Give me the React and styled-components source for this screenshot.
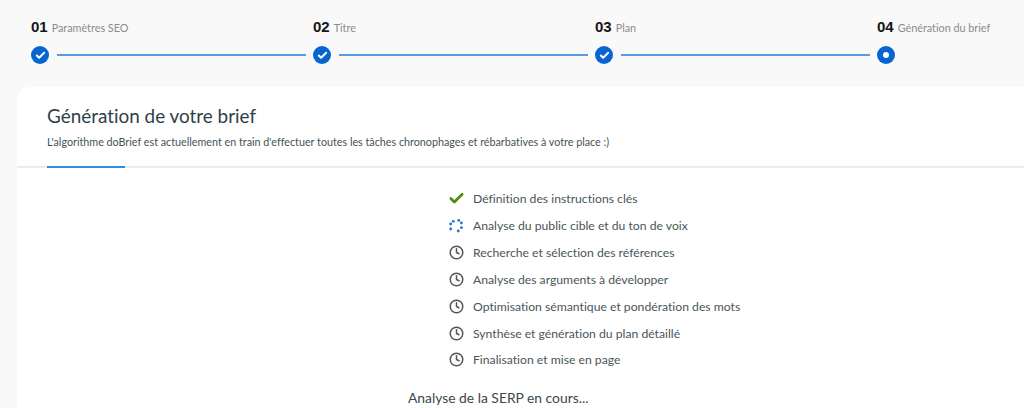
import styled, { createGlobalStyle } from "styled-components";
import { Check, Clock } from "lucide-react";

const GlobalStyle = createGlobalStyle`
  html, body {
    margin: 0;
    height: 100%;
    overflow: hidden;
    background: #f9f9f9;
    font-family: "Lato", "Noto Sans", sans-serif;
    font-variant-ligatures: none;
  }
`;

const Page = styled.div`
  height: 408px;
  overflow: hidden;
  padding-top: 18px;
  box-sizing: border-box;
`;

const Stepper = styled.div`
  display: flex;
  padding-left: 31px;
  height: 69px;
`;

const Step = styled.div`
  flex: 0 0 282px;
  display: flex;
  flex-direction: column;
`;

const StepHead = styled.div`
  display: flex;
  align-items: baseline;
  height: 18px;
  white-space: nowrap;
`;

const StepNumber = styled.span`
  font-family: "Liberation Sans", sans-serif;
  font-weight: 700;
  font-size: 15px;
  color: #161616;
  margin-right: 4px;
`;

const StepLabel = styled.span`
  font-size: 10.8px;
  color: #8b8b8b;
`;

const StepTrack = styled.div`
  display: flex;
  align-items: center;
  margin-top: 10px;
`;

const Dot = styled.div`
  flex: 0 0 18px;
  width: 18px;
  height: 18px;
  border-radius: 50%;
  background: #0764d0;
  display: flex;
  align-items: center;
  justify-content: center;
  color: #fff;
`;

const DotCenter = styled.div`
  width: 6px;
  height: 6px;
  border-radius: 50%;
  background: #fff;
`;

const Line = styled.div`
  width: 249px;
  height: 2px;
  margin-left: 8px;
  background: #5b9be0;
`;

const Card = styled.section`
  margin-left: 17px;
  height: 340px;
  background: #fff;
  border-radius: 12px 0 0 0;
  padding-top: 17px;
  box-sizing: border-box;
`;

const CardHeader = styled.header`
  padding-left: 30px;
  height: 62px;
  border-bottom: 2px solid #ececec;
  position: relative;
`;

const Title = styled.h1`
  margin: 0;
  font-size: 18.9px;
  line-height: 23px;
  font-weight: 400;
  color: #2f3f47;
`;

const Subtitle = styled.p`
  margin: 8px 0 0;
  font-size: 10.75px;
  line-height: 14px;
  color: #445257;
`;

const TabMark = styled.div`
  position: absolute;
  left: 30px;
  bottom: -2px;
  width: 78px;
  height: 2px;
  background: #2f8be6;
`;

const Tasks = styled.ul`
  list-style: none;
  margin: 17.5px 0 0;
  padding: 0 0 0 432px;
`;

const Task = styled.li`
  display: flex;
  align-items: center;
  height: 26.83px;
  font-size: 12.2px;
  color: #4a5559;
`;

const TaskIcon = styled.span`
  flex: 0 0 24px;
  display: flex;
  align-items: center;
  color: ${(p) => p.$color || "#555"};
`;

const Status = styled.p`
  margin: 16px 0 0;
  padding-left: 391px;
  font-size: 13.85px;
  line-height: 18px;
  color: #3a474d;
`;

const tasks = [
  { label: "Définition des instructions clés", state: "done" },
  { label: "Analyse du public cible et du ton de voix", state: "running" },
  { label: "Recherche et sélection des références" },
  { label: "Analyse des arguments à développer" },
  { label: "Optimisation sémantique et pondération des mots" },
  { label: "Synthèse et génération du plan détaillé" },
  { label: "Finalisation et mise en page" },
];

const steps = [
  { number: "01", label: "Paramètres SEO" },
  { number: "02", label: "Titre" },
  { number: "03", label: "Plan" },
  { number: "04", label: "Génération du brief", current: true },
];

const spinnerDots = [
  [4.3, 2.3],
  [9.7, 1.4],
  [12.4, 4],
  [12.4, 8.7],
  [9.3, 12],
  [1.7, 10],
  [1.7, 5],
];

const Spinner = () => (
  <svg width="14" height="14" viewBox="0 0 14 14" fill="#1f74d6">
    {spinnerDots.map(([cx, cy]) => (
      <circle key={`${cx}-${cy}`} cx={cx} cy={cy} r="1.4" />
    ))}
  </svg>
);

const TaskStateIcon = ({ state }) => {
  if (state === "done") {
    return (
      <TaskIcon $color="#4c8c10">
        <Check size={17} strokeWidth={3.8} style={{ marginLeft: -1.5 }} />
      </TaskIcon>
    );
  }
  if (state === "running") {
    return (
      <TaskIcon>
        <Spinner />
      </TaskIcon>
    );
  }
  return (
    <TaskIcon>
      <Clock size={15} strokeWidth={2.4} style={{ marginLeft: -0.5 }} />
    </TaskIcon>
  );
};

export default function App() {
  return (
    <Page>
      <GlobalStyle />
      <Stepper>
        {steps.map((step, i) => (
          <Step key={step.number}>
            <StepHead>
              <StepNumber>{step.number}</StepNumber>
              <StepLabel>{step.label}</StepLabel>
            </StepHead>
            <StepTrack>
              <Dot>
                {step.current ? <DotCenter /> : <Check size={11} strokeWidth={4.4} />}
              </Dot>
              {i < steps.length - 1 && <Line />}
            </StepTrack>
          </Step>
        ))}
      </Stepper>
      <Card>
        <CardHeader>
          <Title>Génération de votre brief</Title>
          <Subtitle>
            L'algorithme doBrief est actuellement en train d'effectuer toutes les tâches
            chronophages et rébarbatives à votre place :)
          </Subtitle>
          <TabMark />
        </CardHeader>
        <Tasks>
          {tasks.map((task) => (
            <Task key={task.label}>
              <TaskStateIcon state={task.state} />
              {task.label}
            </Task>
          ))}
        </Tasks>
        <Status>Analyse de la SERP en cours...</Status>
      </Card>
    </Page>
  );
}
